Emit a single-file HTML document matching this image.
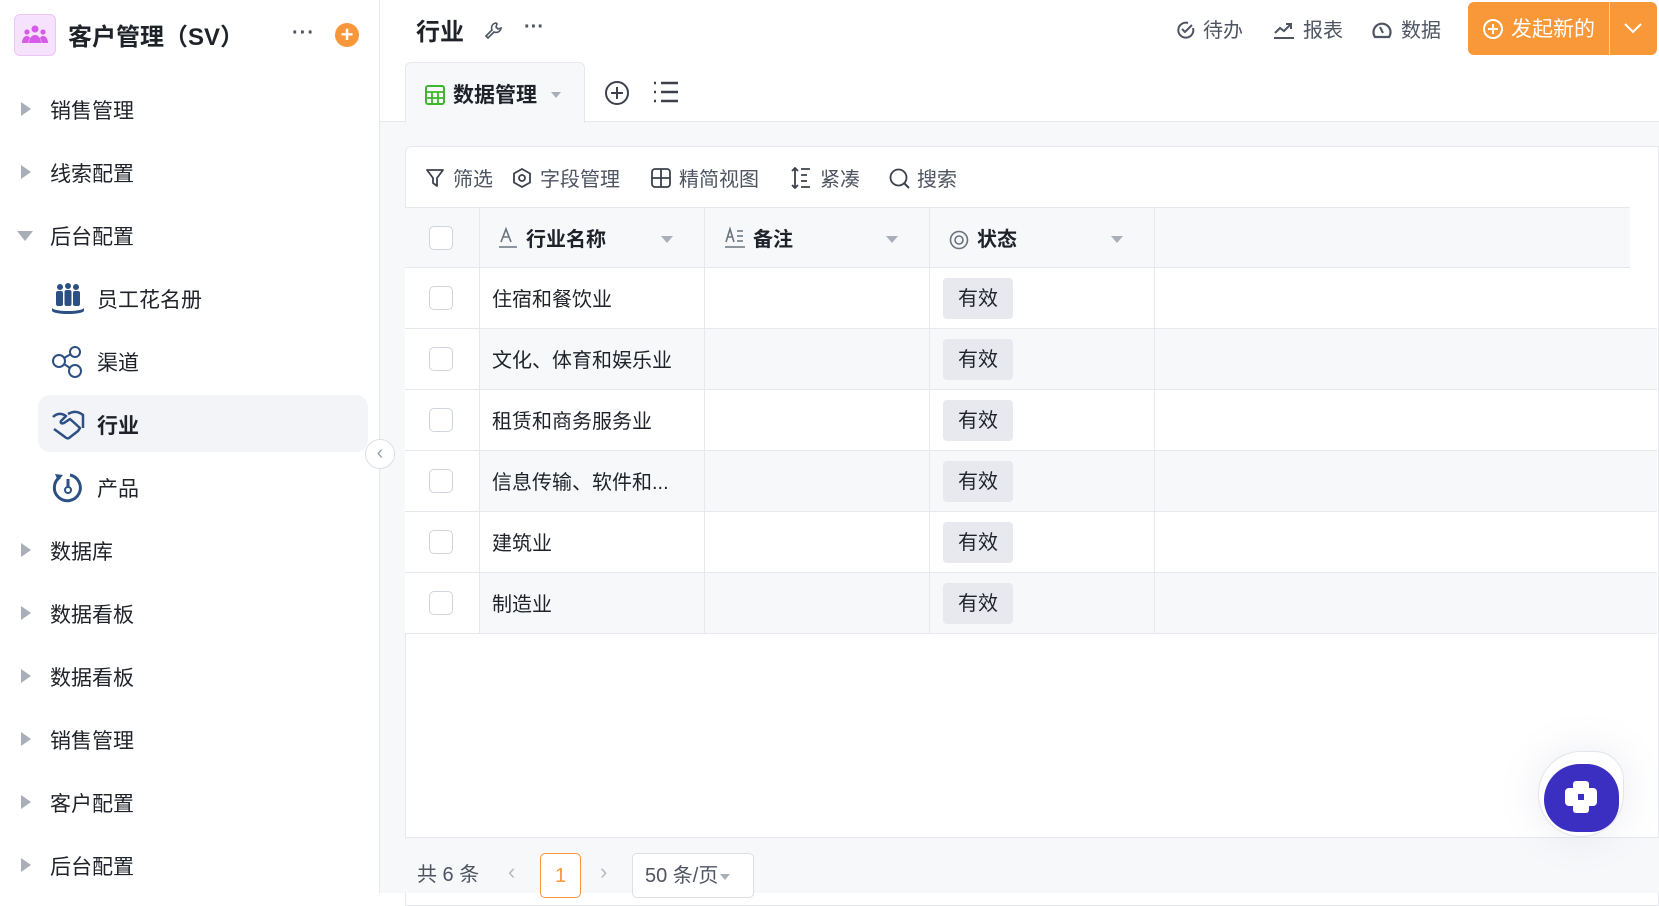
<!DOCTYPE html>
<html><head><meta charset="utf-8"><style>
*{box-sizing:border-box;margin:0;padding:0}
body{width:1659px;height:893px;overflow:hidden;background:#fff;font-family:"Liberation Sans","Noto Sans CJK SC",sans-serif;color:#1f2329;position:relative}
.abs{position:absolute}
.side{left:0;top:0;width:380px;height:893px;border-right:1px solid #e6e8ee;background:#fff}
.nav{position:absolute;left:50px;font-size:21px;line-height:30px;color:#1f2329}
.tri{position:absolute;left:21px;width:0;height:0;border-top:7px solid transparent;border-bottom:7px solid transparent;border-left:10px solid #a9aeb8}
.tridown{position:absolute;left:17px;width:0;height:0;border-left:8px solid transparent;border-right:8px solid transparent;border-top:10px solid #a9aeb8}
.child{position:absolute;left:97px;font-size:21px;line-height:30px}
.ic{position:absolute;left:51px}
.tb{position:absolute;top:165px;font-size:20px;line-height:30px;color:#4e5461}
.row{position:absolute;left:405px;width:1252px;height:61px;border-bottom:1px solid #e6e8ee}
.cell{position:absolute;top:0;height:100%;border-right:1px solid #e6e8ee}
.cb{position:absolute;left:24px;top:18px;width:24px;height:24px;border:1.5px solid #d0d4dc;border-radius:5px;background:#fff}
.txt{position:absolute;left:87px;top:17px;font-size:20px;line-height:30px}
.tag{position:absolute;left:538px;top:10px;width:70px;height:41px;background:#e7e9ef;border-radius:4px;font-size:20px;line-height:43px;text-align:center}
.hd{font-weight:bold;font-size:20px}
</style></head><body>
<div class="abs side">
  <div class="abs" style="left:14px;top:14px;width:42px;height:42px;background:#f6e2fc;border:1px solid #ecc6f7;border-radius:6px">
    <svg width="40" height="40" viewBox="0 0 40 40"><g fill="#d65be8"><circle cx="20" cy="14" r="3.5"/><circle cx="12" cy="17" r="2.6"/><circle cx="28" cy="17" r="2.6"/><path d="M14 28c0-5 3-8 6-8s6 3 6 8z"/><path d="M7 28c0-4 2-7 5-7 1.5 0 2.5 1 3 2-1 1.5-1.5 3-1.5 5z"/><path d="M33 28c0-4-2-7-5-7-1.5 0-2.5 1-3 2 1 1.5 1.5 3 1.5 5z"/></g></svg>
  </div>
  <div class="abs" style="left:68px;top:22px;font-size:24px;font-weight:bold;line-height:32px">客户管理（SV）</div>
  <div class="abs" style="left:292px;top:22px;font-size:20px;font-weight:bold;color:#4e5461;letter-spacing:1px">···</div>
  <div class="abs" style="left:335px;top:23px;width:24px;height:24px;border-radius:50%;background:#f7973a;color:#fff;font-size:22px;line-height:23px;text-align:center;font-weight:bold">+</div>

  <div class="tri" style="top:102px"></div><div class="nav" style="top:97px">销售管理</div>
  <div class="tri" style="top:165px"></div><div class="nav" style="top:160px">线索配置</div>
  <div class="tridown" style="top:231px"></div><div class="nav" style="top:223px">后台配置</div>

  <svg class="ic" style="top:282px" width="34" height="34" viewBox="0 0 34 34"><g fill="#2d5084"><circle cx="9" cy="5" r="3"/><circle cx="17" cy="4" r="3"/><circle cx="25" cy="5" r="3"/><rect x="5" y="9" width="7" height="15" rx="2"/><rect x="13.5" y="8" width="7" height="16" rx="2"/><rect x="22" y="9" width="7" height="15" rx="2"/><path d="M1 26c3 4 29 4 32 0v3c-3 4-29 4-32 0z"/></g></svg>
  <div class="child" style="top:286px">员工花名册</div>

  <svg class="ic" style="top:345px" width="34" height="34" viewBox="0 0 34 34"><g fill="none" stroke="#2d5084" stroke-width="2"><circle cx="8" cy="16" r="6"/><circle cx="24" cy="7" r="5"/><circle cx="24" cy="26" r="6"/><path d="M13 13l7-4M13 19l6 4"/></g></svg>
  <div class="child" style="top:349px">渠道</div>

  <div class="abs" style="left:38px;top:395px;width:330px;height:57px;background:#f3f4f7;border-radius:12px"></div>
  <svg class="ic" style="top:408px" width="34" height="34" viewBox="0 0 34 34"><g fill="none" stroke="#2d5084" stroke-width="2.5" stroke-linejoin="round"><path d="M2 9c4-4 9-4 13-1l-5 5c-1 2 1 3 3 2l6-4 10 9-2 3-9 7c-2 1-3 0-4-1L3 21"/><path d="M17 6c5-3 10-3 15 1v13"/></g></svg>
  <div class="child" style="top:412px;font-weight:bold">行业</div>

  <svg class="ic" style="top:471px" width="34" height="34" viewBox="0 0 34 34"><g fill="none" stroke="#2d5084" stroke-width="3"><path d="M9 6A13 13 0 1 0 19 4"/><path d="M17 8v10"/></g><circle cx="17" cy="19" r="3" fill="#fff" stroke="#2d5084" stroke-width="2"/><path d="M4 3l8 1-5 6z" fill="#2d5084"/></svg>
  <div class="child" style="top:475px">产品</div>

  <div class="tri" style="top:543px"></div><div class="nav" style="top:538px">数据库</div>
  <div class="tri" style="top:606px"></div><div class="nav" style="top:601px">数据看板</div>
  <div class="tri" style="top:669px"></div><div class="nav" style="top:664px">数据看板</div>
  <div class="tri" style="top:732px"></div><div class="nav" style="top:727px">销售管理</div>
  <div class="tri" style="top:795px"></div><div class="nav" style="top:790px">客户配置</div>
  <div class="tri" style="top:858px"></div><div class="nav" style="top:853px">后台配置</div>
</div>

<!-- top bar -->
<div class="abs" style="left:416px;top:16px;font-size:24px;font-weight:bold;line-height:34px">行业</div>
<svg class="abs" style="left:484px;top:21px" width="20" height="20" viewBox="0 0 20 20"><path d="M12 2a5 5 0 0 0-4 7l-6 6 2 2 6-6a5 5 0 0 0 7-4l-3 1-2-2 1-3z" fill="none" stroke="#4e5461" stroke-width="1.6"/></svg>
<div class="abs" style="left:524px;top:16px;font-size:20px;font-weight:bold;color:#4e5461">···</div>

<svg class="abs" style="left:1176px;top:20px" width="20" height="20" viewBox="0 0 20 20"><path d="M17 8A7.5 7.5 0 1 1 12 3" fill="none" stroke="#4e5461" stroke-width="2"/><path d="M6 9l3 3 7-7" fill="none" stroke="#4e5461" stroke-width="2"/></svg>
<div class="abs" style="left:1203px;top:16px;font-size:20px;color:#4e5461;line-height:30px">待办</div>
<svg class="abs" style="left:1273px;top:20px" width="22" height="20" viewBox="0 0 22 20"><path d="M2 13l5-5 4 3 7-7M13 4h5v5M1 18h20" fill="none" stroke="#4e5461" stroke-width="2"/></svg>
<div class="abs" style="left:1303px;top:16px;font-size:20px;color:#4e5461;line-height:30px">报表</div>
<svg class="abs" style="left:1371px;top:19px" width="22" height="22" viewBox="0 0 22 22"><path d="M4 18A8.5 8.5 0 1 1 18 18z" fill="none" stroke="#4e5461" stroke-width="2.2"/><path d="M9 8l3 6" stroke="#4e5461" stroke-width="2"/></svg>
<div class="abs" style="left:1401px;top:16px;font-size:20px;color:#4e5461;line-height:30px">数据</div>

<div class="abs" style="left:1468px;top:2px;width:189px;height:53px;background:#f99838;border-radius:6px"></div>
<div class="abs" style="left:1609px;top:2px;width:1px;height:53px;background:#fcd2a6"></div>
<svg class="abs" style="left:1482px;top:18px" width="22" height="22" viewBox="0 0 22 22"><circle cx="11" cy="11" r="9" fill="none" stroke="#fff" stroke-width="2"/><path d="M11 6v10M6 11h10" stroke="#fff" stroke-width="2"/></svg>
<div class="abs" style="left:1511px;top:15px;font-size:21px;color:#fff;line-height:30px">发起新的</div>
<svg class="abs" style="left:1622px;top:20px" width="22" height="16" viewBox="0 0 22 16"><path d="M3 4l8 8 8-8" fill="none" stroke="#fff" stroke-width="2"/></svg>

<!-- tabs -->
<div class="abs" style="left:380px;top:121px;width:1279px;height:772px;background:#f7f8fa;border-top:1px solid #e6e8ee"></div>
<div class="abs" style="left:405px;top:62px;width:180px;height:61px;background:#f7f8fa;border:1px solid #e6e8ee;border-bottom:none;border-radius:6px 6px 0 0"></div>
<svg class="abs" style="left:425px;top:85px" width="20" height="20" viewBox="0 0 20 20"><rect x="1" y="1" width="18" height="18" rx="2" fill="none" stroke="#3fb62d" stroke-width="2"/><path d="M1 7h18M1 13h18M7 7v12M13 7v12" stroke="#3fb62d" stroke-width="1.8"/></svg>
<div class="abs" style="left:453px;top:81px;font-size:21px;font-weight:bold;line-height:30px">数据管理</div>
<div class="abs" style="left:551px;top:92px;border-left:5px solid transparent;border-right:5px solid transparent;border-top:6px solid #a9aeb8"></div>
<svg class="abs" style="left:604px;top:80px" width="26" height="26" viewBox="0 0 26 26"><circle cx="13" cy="13" r="11" fill="none" stroke="#3c414b" stroke-width="2"/><path d="M13 7v12M7 13h12" stroke="#3c414b" stroke-width="2"/></svg>
<svg class="abs" style="left:653px;top:81px" width="26" height="22" viewBox="0 0 26 22"><g stroke="#3c414b" stroke-width="2.4"><path d="M8 2h17M8 11h17M8 20h17"/><path d="M1 2h2M1 11h2M1 20h2"/></g></svg>

<!-- card -->
<div class="abs" style="left:405px;top:146px;width:1254px;height:760px;background:#fff;border:1px solid #e6e8ee;border-radius:6px 0 0 0"></div>
<svg class="abs" style="left:425px;top:168px" width="20" height="20" viewBox="0 0 20 20"><path d="M2 2h16l-6 8v8l-4-3v-5z" fill="none" stroke="#3c414b" stroke-width="1.8" stroke-linejoin="round"/></svg>
<div class="tb" style="left:453px">筛选</div>
<svg class="abs" style="left:512px;top:168px" width="20" height="20" viewBox="0 0 20 20"><path d="M10 1l8 4.5v9L10 19l-8-4.5v-9z" fill="none" stroke="#3c414b" stroke-width="1.8"/><circle cx="10" cy="10" r="3" fill="none" stroke="#3c414b" stroke-width="1.8"/></svg>
<div class="tb" style="left:540px">字段管理</div>
<svg class="abs" style="left:651px;top:168px" width="20" height="20" viewBox="0 0 20 20"><rect x="1" y="1" width="18" height="18" rx="3" fill="none" stroke="#3c414b" stroke-width="1.8"/><path d="M10 1v18M1 10h18" stroke="#3c414b" stroke-width="1.8"/></svg>
<div class="tb" style="left:679px">精简视图</div>
<svg class="abs" style="left:791px;top:167px" width="20" height="22" viewBox="0 0 20 22"><path d="M4 1v20M1 4l3-3 3 3M1 18l3 3 3-3M10 2h9M10 8h6M10 14h6M10 20h9" fill="none" stroke="#3c414b" stroke-width="1.8"/></svg>
<div class="tb" style="left:820px">紧凑</div>
<svg class="abs" style="left:889px;top:168px" width="22" height="22" viewBox="0 0 22 22"><circle cx="9.5" cy="9.5" r="8" fill="none" stroke="#3c414b" stroke-width="1.8"/><path d="M15 15l5 5" stroke="#3c414b" stroke-width="2"/></svg>
<div class="tb" style="left:917px">搜索</div>

<!-- header row -->
<div class="row" style="top:207px;background:#f7f8fa;border-top:1px solid #e6e8ee;width:1225px">
  <div class="cell" style="left:0;width:75px"><div class="cb"></div></div>
  <div class="cell" style="left:75px;width:225px">
    <svg class="abs" style="left:18px;top:18px" width="20" height="24" viewBox="0 0 20 24"><path d="M3 16L8 3l5 13M5 11h6M1 21h18" fill="none" stroke="#6b7280" stroke-width="1.6"/></svg>
    <div class="abs hd" style="left:46px;top:17px;line-height:30px">行业名称</div>
    <div class="abs" style="left:181px;top:28px;border-left:6px solid transparent;border-right:6px solid transparent;border-top:7px solid #a9aeb8"></div>
  </div>
  <div class="cell" style="left:300px;width:225px">
    <svg class="abs" style="left:19px;top:18px" width="22" height="24" viewBox="0 0 22 24"><path d="M2 16L6 3l4 13M3.5 11h5M13 5h6M13 10h6M13 15h6M1 21h20" fill="none" stroke="#6b7280" stroke-width="1.6"/></svg>
    <div class="abs hd" style="left:48px;top:17px;line-height:30px">备注</div>
    <div class="abs" style="left:181px;top:28px;border-left:6px solid transparent;border-right:6px solid transparent;border-top:7px solid #a9aeb8"></div>
  </div>
  <div class="cell" style="left:525px;width:225px">
    <svg class="abs" style="left:19px;top:22px" width="20" height="20" viewBox="0 0 20 20"><circle cx="10" cy="10" r="8.5" fill="none" stroke="#6b7280" stroke-width="1.6"/><circle cx="10" cy="10" r="4" fill="none" stroke="#6b7280" stroke-width="1.6"/></svg>
    <div class="abs hd" style="left:47px;top:17px;line-height:30px">状态</div>
    <div class="abs" style="left:181px;top:28px;border-left:6px solid transparent;border-right:6px solid transparent;border-top:7px solid #a9aeb8"></div>
  </div>
</div>

<div class="row" style="top:268px;background:#fff"><div class="cell" style="left:0;width:75px"><div class="cb"></div></div><div class="cell" style="left:75px;width:225px"></div><div class="cell" style="left:300px;width:225px"></div><div class="cell" style="left:525px;width:225px"></div><div class="txt">住宿和餐饮业</div><div class="tag">有效</div></div>
<div class="row" style="top:329px;background:#f7f8fa"><div class="cell" style="left:0;width:75px;background:#fff"><div class="cb"></div></div><div class="cell" style="left:75px;width:225px"></div><div class="cell" style="left:300px;width:225px"></div><div class="cell" style="left:525px;width:225px"></div><div class="txt">文化、体育和娱乐业</div><div class="tag">有效</div></div>
<div class="row" style="top:390px;background:#fff"><div class="cell" style="left:0;width:75px"><div class="cb"></div></div><div class="cell" style="left:75px;width:225px"></div><div class="cell" style="left:300px;width:225px"></div><div class="cell" style="left:525px;width:225px"></div><div class="txt">租赁和商务服务业</div><div class="tag">有效</div></div>
<div class="row" style="top:451px;background:#f7f8fa"><div class="cell" style="left:0;width:75px;background:#fff"><div class="cb"></div></div><div class="cell" style="left:75px;width:225px"></div><div class="cell" style="left:300px;width:225px"></div><div class="cell" style="left:525px;width:225px"></div><div class="txt">信息传输、软件和...</div><div class="tag">有效</div></div>
<div class="row" style="top:512px;background:#fff"><div class="cell" style="left:0;width:75px"><div class="cb"></div></div><div class="cell" style="left:75px;width:225px"></div><div class="cell" style="left:300px;width:225px"></div><div class="cell" style="left:525px;width:225px"></div><div class="txt">建筑业</div><div class="tag">有效</div></div>
<div class="row" style="top:573px;background:#f7f8fa"><div class="cell" style="left:0;width:75px;background:#fff"><div class="cb"></div></div><div class="cell" style="left:75px;width:225px"></div><div class="cell" style="left:300px;width:225px"></div><div class="cell" style="left:525px;width:225px"></div><div class="txt">制造业</div><div class="tag">有效</div></div>

<!-- footer -->
<div class="abs" style="left:405px;top:837px;width:1254px;height:56px;background:#f7f8fa;border-top:1px solid #e6e8ee"></div>
<div class="abs" style="left:417px;top:860px;font-size:20px;color:#4e5461;line-height:30px">共 6 条</div>
<div class="abs" style="left:508px;top:859px;font-size:22px;color:#b6bac3">‹</div>
<div class="abs" style="left:540px;top:853px;width:41px;height:45px;border:1px solid #f7973a;border-radius:5px;background:#fff;color:#f7973a;font-size:20px;text-align:center;line-height:44px">1</div>
<div class="abs" style="left:600px;top:859px;font-size:22px;color:#b6bac3">›</div>
<div class="abs" style="left:632px;top:853px;width:122px;height:45px;border:1px solid #dcdfe6;border-radius:5px;background:#fff;font-size:20px;color:#4e5461;line-height:44px;padding-left:12px">50 条/页<span style="display:inline-block;margin-left:2px;border-left:5px solid transparent;border-right:5px solid transparent;border-top:6px solid #a9aeb8;vertical-align:middle"></span></div>

<!-- collapse -->
<div class="abs" style="left:365px;top:439px;width:30px;height:30px;border-radius:50%;border:1px solid #dcdfe6;background:#fff;text-align:center;color:#9aa0ab;font-size:20px;line-height:26px">‹</div>

<!-- chat -->
<div class="abs" style="left:1538px;top:751px;width:86px;height:86px;background:#fff;border:1px solid #e3e5ec;border-radius:44px 30px 44px 44px;box-shadow:0 0 40px rgba(120,130,160,.15)"></div>
<div class="abs" style="left:1544px;top:764px;width:75px;height:68px;background:#3a2fc1;border-radius:40px 36px 32px 36px"></div>
<svg class="abs" style="left:1562px;top:779px" width="38" height="36" viewBox="0 0 38 36"><g fill="#fff"><rect x="11" y="2" width="16" height="32" rx="3"/><rect x="3" y="9" width="32" height="18" rx="4"/></g><rect x="16" y="15" width="6" height="6" fill="#3a2fc1"/></svg>
</body></html>
